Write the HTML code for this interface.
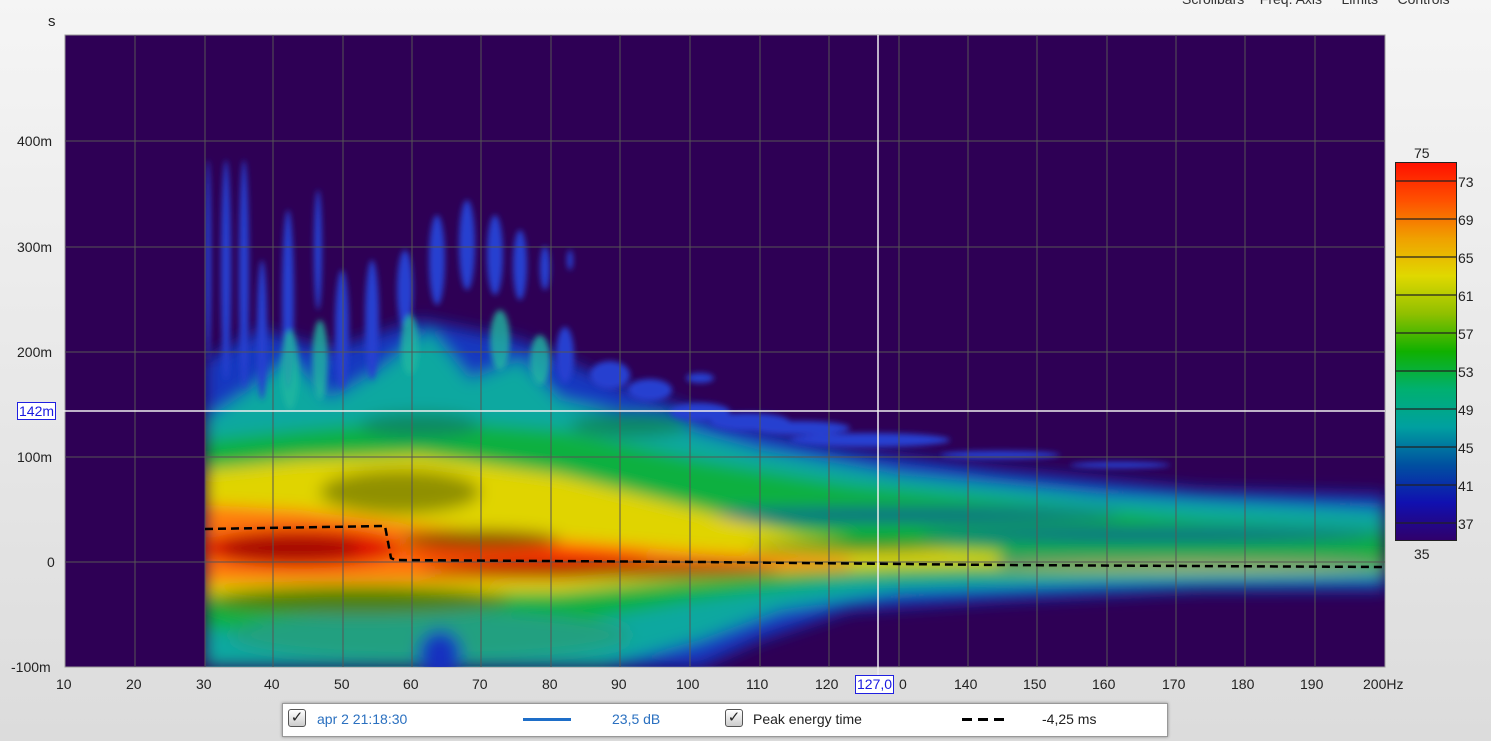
<!DOCTYPE html>
<html><head><meta charset="utf-8"><style>
body{margin:0;width:1491px;height:741px;overflow:hidden;background:linear-gradient(#f5f5f5,#dcdcdc);font-family:"Liberation Sans",sans-serif;color:#222;position:relative}
.t{position:absolute;font-size:14px;white-space:nowrap}
</style></head><body>
<div class="t" style="left:1182px;top:-9px;color:#333">Scrollbars &nbsp;&nbsp; Freq. Axis &nbsp;&nbsp;&nbsp; Limits &nbsp;&nbsp;&nbsp; Controls</div>
<div class="t" style="left:48px;top:13px;font-size:15px">s</div>
<svg width="1491" height="741" style="position:absolute;left:0;top:0">
<defs>
<clipPath id="c"><rect x="205" y="35" width="1180" height="632"/></clipPath>
<filter id="b" x="-20%" y="-20%" width="140%" height="140%"><feGaussianBlur stdDeviation="8"/></filter>
<filter id="b2" x="-50%" y="-50%" width="200%" height="200%"><feGaussianBlur stdDeviation="3"/></filter>
<linearGradient id="cb" x1="0" y1="0" x2="0" y2="1">
<stop offset="0" stop-color="#ff1000"/><stop offset="0.1" stop-color="#ff5000"/><stop offset="0.2" stop-color="#f0a000"/><stop offset="0.3" stop-color="#e0d800"/><stop offset="0.4" stop-color="#90c000"/><stop offset="0.5" stop-color="#10b000"/><stop offset="0.6" stop-color="#00b070"/><stop offset="0.7" stop-color="#00a0a0"/><stop offset="0.8" stop-color="#0050a0"/><stop offset="0.9" stop-color="#1010b0"/><stop offset="1" stop-color="#30006a"/>
</linearGradient>
</defs>
<rect x="65" y="35" width="1320" height="632" fill="#2e0055" stroke="#999" stroke-width="1"/>
<g clip-path="url(#c)">
<g filter="url(#b)">
<path d="M205 360 L260 330 L330 350 L420 320 L520 340 L620 385 L720 420 L850 450 L1000 470 L1200 490 L1385 495 L1385 590 L1200 590 L1000 600 L850 610 L760 640 L700 667 L205 667Z" fill="#1838c0"/>
<path d="M205 420 L250 390 L290 360 L330 400 L380 370 L430 330 L470 380 L520 360 L560 400 L650 420 L760 450 L900 475 L1100 495 L1385 510 L1385 580 L1100 585 L900 592 L780 610 L700 640 L600 667 L205 667Z" fill="#10a8a0"/>
<path d="M205 440 L300 430 L420 420 L560 430 L700 460 L850 485 L1000 500 L1200 520 L1385 530 L1385 570 L1200 570 L1000 575 L850 580 L700 600 L560 625 L205 630Z" fill="#10b040"/>
<ellipse cx="420" cy="425" rx="60" ry="12" fill="#108860"/>
<ellipse cx="630" cy="425" rx="60" ry="12" fill="#108860"/>
<ellipse cx="430" cy="635" rx="200" ry="25" fill="#20a080"/>
<ellipse cx="440" cy="655" rx="22" ry="25" fill="#1530c0"/>
<ellipse cx="900" cy="515" rx="220" ry="5" fill="#1010a0"/>
<ellipse cx="1150" cy="535" rx="230" ry="5" fill="#1020a0"/>
<ellipse cx="1150" cy="562" rx="230" ry="4" fill="#1020a0"/>
<path d="M205 470 L300 460 L420 455 L560 475 L680 505 L800 535 L900 548 L1000 553 L1000 566 L900 568 L800 572 L680 580 L560 592 L205 595Z" fill="#e0d400"/>
<ellipse cx="400" cy="492" rx="80" ry="22" fill="#909000"/>
<ellipse cx="850" cy="547" rx="100" ry="5" fill="#108020"/>
<path d="M205 505 L300 510 L420 525 L560 540 L700 552 L850 560 L850 568 L700 572 L560 580 L205 583Z" fill="#ff7a10"/>
<ellipse cx="300" cy="548" rx="100" ry="20" fill="#e01000"/>
<ellipse cx="290" cy="548" rx="70" ry="12" fill="#a01000"/>
<ellipse cx="520" cy="555" rx="130" ry="8" fill="#ff3000"/>
<ellipse cx="480" cy="540" rx="80" ry="10" fill="#905000"/>
<ellipse cx="600" cy="570" rx="180" ry="7" fill="#902000"/>
<ellipse cx="360" cy="600" rx="150" ry="14" fill="#508000"/>
<ellipse cx="1180" cy="566" rx="210" ry="4" fill="#c0c000"/>
</g>
<g filter="url(#b2)">
<g fill="#2840d0">
<ellipse cx="208" cy="260" rx="3" ry="100"/><ellipse cx="226" cy="270" rx="5" ry="110"/><ellipse cx="244" cy="275" rx="5" ry="115"/>
<ellipse cx="262" cy="330" rx="5" ry="70"/><ellipse cx="288" cy="300" rx="6" ry="90"/><ellipse cx="318" cy="250" rx="4" ry="60"/>
<ellipse cx="342" cy="330" rx="7" ry="60"/><ellipse cx="372" cy="320" rx="7" ry="60"/><ellipse cx="405" cy="290" rx="8" ry="40"/>
<ellipse cx="437" cy="260" rx="8" ry="45"/><ellipse cx="467" cy="245" rx="8" ry="45"/><ellipse cx="495" cy="255" rx="8" ry="40"/>
<ellipse cx="520" cy="265" rx="7" ry="35"/><ellipse cx="545" cy="268" rx="5" ry="22"/><ellipse cx="570" cy="260" rx="3" ry="10"/>
<ellipse cx="565" cy="355" rx="9" ry="28"/><ellipse cx="610" cy="375" rx="20" ry="14"/><ellipse cx="650" cy="390" rx="22" ry="11"/>
<ellipse cx="700" cy="378" rx="14" ry="5"/><ellipse cx="700" cy="412" rx="30" ry="9"/><ellipse cx="750" cy="422" rx="40" ry="9"/>
<ellipse cx="800" cy="428" rx="50" ry="7"/><ellipse cx="870" cy="440" rx="80" ry="7"/><ellipse cx="1000" cy="455" rx="60" ry="4"/>
<ellipse cx="1120" cy="465" rx="50" ry="3"/>
</g>
<g fill="#20b8a0" opacity="0.8">
<ellipse cx="290" cy="370" rx="9" ry="40"/><ellipse cx="320" cy="360" rx="8" ry="40"/><ellipse cx="410" cy="345" rx="9" ry="30"/><ellipse cx="500" cy="340" rx="10" ry="30"/><ellipse cx="540" cy="360" rx="10" ry="25"/>
</g>
</g>
</g>
<g stroke="#555" stroke-width="1">
<line x1="135" y1="35" x2="135" y2="667"/><line x1="205" y1="35" x2="205" y2="667"/><line x1="273" y1="35" x2="273" y2="667"/><line x1="343" y1="35" x2="343" y2="667"/><line x1="412" y1="35" x2="412" y2="667"/><line x1="481" y1="35" x2="481" y2="667"/><line x1="551" y1="35" x2="551" y2="667"/><line x1="620" y1="35" x2="620" y2="667"/><line x1="690" y1="35" x2="690" y2="667"/><line x1="760" y1="35" x2="760" y2="667"/><line x1="829" y1="35" x2="829" y2="667"/><line x1="899" y1="35" x2="899" y2="667"/><line x1="968" y1="35" x2="968" y2="667"/><line x1="1037" y1="35" x2="1037" y2="667"/><line x1="1107" y1="35" x2="1107" y2="667"/><line x1="1176" y1="35" x2="1176" y2="667"/><line x1="1245" y1="35" x2="1245" y2="667"/><line x1="1315" y1="35" x2="1315" y2="667"/>
<line x1="65" y1="141" x2="1385" y2="141"/><line x1="65" y1="247" x2="1385" y2="247"/><line x1="65" y1="352" x2="1385" y2="352"/><line x1="65" y1="457" x2="1385" y2="457"/><line x1="65" y1="562" x2="1385" y2="562"/>
</g>
<path d="M205 529 L385 526 L391 558 L395 560 L700 562 L1000 565 L1385 567" fill="none" stroke="#000" stroke-width="2.5" stroke-dasharray="8 5"/>
<line x1="878" y1="35" x2="878" y2="676" stroke="#eee" stroke-width="1.5"/>
<line x1="63" y1="411" x2="1385" y2="411" stroke="#eee" stroke-width="1.5"/>
<rect x="1395.5" y="162.5" width="61" height="378" fill="url(#cb)" stroke="#222"/>
<g stroke="#222" stroke-width="1.3">
<line x1="1395" y1="181" x2="1456" y2="181"/><line x1="1395" y1="219" x2="1456" y2="219"/><line x1="1395" y1="257" x2="1456" y2="257"/><line x1="1395" y1="295" x2="1456" y2="295"/><line x1="1395" y1="333" x2="1456" y2="333"/><line x1="1395" y1="371" x2="1456" y2="371"/><line x1="1395" y1="409" x2="1456" y2="409"/><line x1="1395" y1="447" x2="1456" y2="447"/><line x1="1395" y1="485" x2="1456" y2="485"/><line x1="1395" y1="523" x2="1456" y2="523"/>
</g>
</svg>
<div class="t" style="left:17px;top:133px">400m</div>
<div class="t" style="left:17px;top:239px">300m</div>
<div class="t" style="left:17px;top:344px">200m</div>
<div class="t" style="left:17px;top:449px">100m</div>
<div class="t" style="left:47px;top:554px">0</div>
<div class="t" style="left:11px;top:659px">-100m</div>
<div class="t" style="left:17px;top:402px;color:#1a1ae0;border:1px solid #2020e0;background:#fff;padding:0 1px;line-height:16px">142m</div>
<div class="t" style="top:676px;left:56px;width:1400px;height:20px">
<span class="t" style="left:0">10</span><span class="t" style="left:70px">20</span><span class="t" style="left:140px">30</span><span class="t" style="left:208px">40</span><span class="t" style="left:278px">50</span><span class="t" style="left:347px">60</span><span class="t" style="left:416px">70</span><span class="t" style="left:486px">80</span><span class="t" style="left:555px">90</span><span class="t" style="left:620px">100</span><span class="t" style="left:690px">110</span><span class="t" style="left:759px">120</span><span class="t" style="left:843px">0</span><span class="t" style="left:898px">140</span><span class="t" style="left:967px">150</span><span class="t" style="left:1036px">160</span><span class="t" style="left:1106px">170</span><span class="t" style="left:1175px">180</span><span class="t" style="left:1244px">190</span><span class="t" style="left:1307px">200Hz</span>
</div>
<div class="t" style="left:855px;top:675px;color:#1a1ae0;border:1px solid #2020e0;background:#fff;padding:0 1px;line-height:17px">127,0</div>
<div class="t" style="left:1414px;top:145px">75</div>
<div class="t" style="left:1414px;top:546px">35</div>
<div class="t" style="left:1458px;top:174px">73</div><div class="t" style="left:1458px;top:212px">69</div><div class="t" style="left:1458px;top:250px">65</div><div class="t" style="left:1458px;top:288px">61</div><div class="t" style="left:1458px;top:326px">57</div><div class="t" style="left:1458px;top:364px">53</div><div class="t" style="left:1458px;top:402px">49</div><div class="t" style="left:1458px;top:440px">45</div><div class="t" style="left:1458px;top:478px">41</div><div class="t" style="left:1458px;top:516px">37</div>
<div style="position:absolute;left:282px;top:703px;width:884px;height:32px;background:#fff;border:1px solid #999;box-shadow:0 0 3px #888"></div>
<div style="position:absolute;left:288px;top:709px;width:16px;height:16px;border:1px solid #555;border-radius:3px;background:linear-gradient(#fff,#ccc);font-size:15px;line-height:16px;text-align:center">✓</div>
<div style="position:absolute;left:725px;top:709px;width:16px;height:16px;border:1px solid #555;border-radius:3px;background:linear-gradient(#fff,#ccc);font-size:15px;line-height:16px;text-align:center">✓</div>
<div class="t" style="left:317px;top:711px;color:#2a70c0">apr 2 21:18:30</div>
<div style="position:absolute;left:523px;top:718px;width:48px;height:3px;background:#1e6ec8"></div>
<div class="t" style="left:612px;top:711px;color:#2a70c0">23,5 dB</div>
<div class="t" style="left:753px;top:711px">Peak energy time</div>
<div style="position:absolute;left:962px;top:718px;width:42px;height:3px;background:repeating-linear-gradient(90deg,#000 0 10px,transparent 10px 16px)"></div>
<div class="t" style="left:1042px;top:711px">-4,25 ms</div>
</body></html>
